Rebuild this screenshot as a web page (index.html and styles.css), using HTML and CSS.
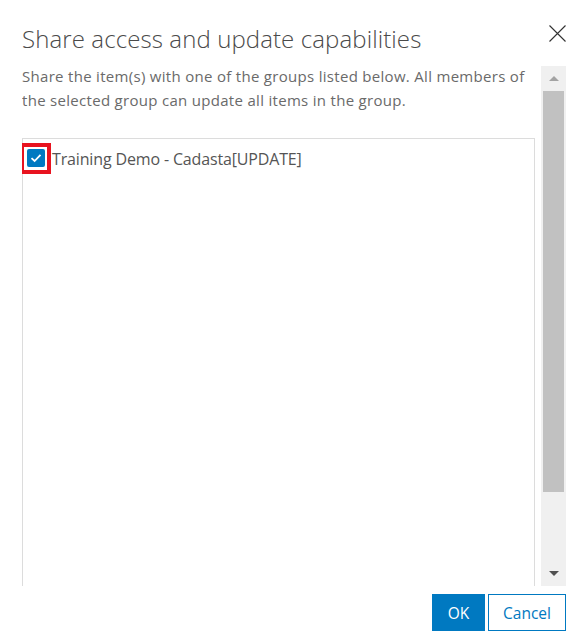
FILE: index.html
```html
<!DOCTYPE html>
<html lang="en">
<head>
<meta charset="utf-8">
<title>Share access and update capabilities</title>
<link rel="stylesheet" href="styles.css">
</head>
<body>
<div class="dialog">
  <header class="head">
    <h1 class="title">Share access and update capabilities</h1>
    <button class="close" aria-label="Close">
      <svg width="17" height="17" viewBox="0 0 17 17"><path d="M0.5 0.5 L16.5 16.5 M16.5 0.5 L0.5 16.5" stroke="#323232" stroke-width="1.1" fill="none"/></svg>
    </button>
  </header>
  <div class="body">
    <div class="content">
      <p class="desc">Share the item(s) with one of the groups listed below. All members of the selected group can update all items in the group.</p>
      <div class="list">
        <label class="item">
          <span class="mark"><span class="cb"><svg width="12" height="10" viewBox="0 0 12 10"><path d="M1.5 5.2 L4.6 8 L10.5 1.8" stroke="#fff" stroke-width="1.8" fill="none"/></svg></span></span>
          <span class="item-text">Training Demo - Cadasta[UPDATE]</span>
        </label>
      </div>
    </div>
    <div class="scrollbar">
      <div class="arrow"><span class="tri up"></span></div>
      <div class="track"><div class="thumb"></div></div>
      <div class="arrow"><span class="tri down"></span></div>
    </div>
  </div>
  <footer class="foot">
    <button class="btn primary">OK</button>
    <button class="btn secondary">Cancel</button>
  </footer>
</div>
</body>
</html>
```
FILE: styles.css
```css
html, body {
  margin: 0;
  padding: 0;
  background: #fff;
}
body {
  font-family: "Open Sans", "Noto Sans", sans-serif;
  color: #4c4c4c;
}
.dialog {
  width: 584px;
  height: 644px;
  box-sizing: border-box;
  padding: 0 18px 0 22px;
  display: flex;
  flex-direction: column;
}
.head {
  height: 66px;
  display: flex;
  justify-content: space-between;
  align-items: flex-start;
}
.title {
  margin: 24px 0 0 0;
  font-size: 24px;
  line-height: 30px;
  font-weight: 300;
  color: #4a4a4a;
  letter-spacing: 0.1px;
}
.close {
  margin-top: 25px;
  padding: 0;
  border: 0;
  background: none;
  width: 17px;
  height: 17px;
  display: block;
}
.close svg { display: block; }
.body {
  height: 520px;
  display: flex;
}
.content {
  flex: 1;
  overflow: hidden;
}
.desc {
  margin: -1px 0 0 0;
  font-size: 15px;
  line-height: 23.5px;
  letter-spacing: 0.3px;
  color: #6a6a6a;
}
.list {
  margin-top: 26px;
  width: 513px;
  height: 470px;
  box-sizing: border-box;
  border: 1px solid #dcdcdc;
}
.item {
  display: flex;
  align-items: center;
  margin-top: 4px;
  margin-left: -3px;
}
.mark {
  display: block;
  border: 4px solid #e8131f;
  padding: 2px 2px 3px 3px;
  background: #fff;
}
.cb {
  display: flex;
  align-items: center;
  justify-content: center;
  width: 18px;
  height: 18px;
  background: #0079c1;
  border-radius: 2px;
}
.cb svg { display: block; }
.item-text {
  margin-left: 1px;
  font-size: 16px;
  letter-spacing: -0.15px;
  color: #555;
}
.scrollbar {
  width: 25px;
  display: flex;
  flex-direction: column;
  background: #f0f0f0;
}
.arrow {
  height: 25px;
  display: flex;
  align-items: center;
  justify-content: center;
}
.tri {
  width: 0;
  height: 0;
  border-left: 5px solid transparent;
  border-right: 5px solid transparent;
}
.tri.up { border-bottom: 5px solid #a3a3a3; }
.tri.down { border-top: 5px solid #505050; }
.track {
  flex: 1;
  padding: 0 2px;
}
.thumb {
  height: 401px;
  background: #c1c1c1;
}
.foot {
  display: flex;
  justify-content: flex-end;
  gap: 3px;
  margin-top: 8px;
}
.btn {
  height: 37px;
  box-sizing: border-box;
  font-family: "Open Sans", "Noto Sans", sans-serif;
  font-size: 15.5px;
  padding: 0;
  border: 1px solid #0079c1;
  cursor: pointer;
}
.primary {
  width: 53px;
  background: #0079c1;
  color: #fff;
}
.secondary {
  width: 78px;
  background: #fff;
  color: #0079c1;
}
```
